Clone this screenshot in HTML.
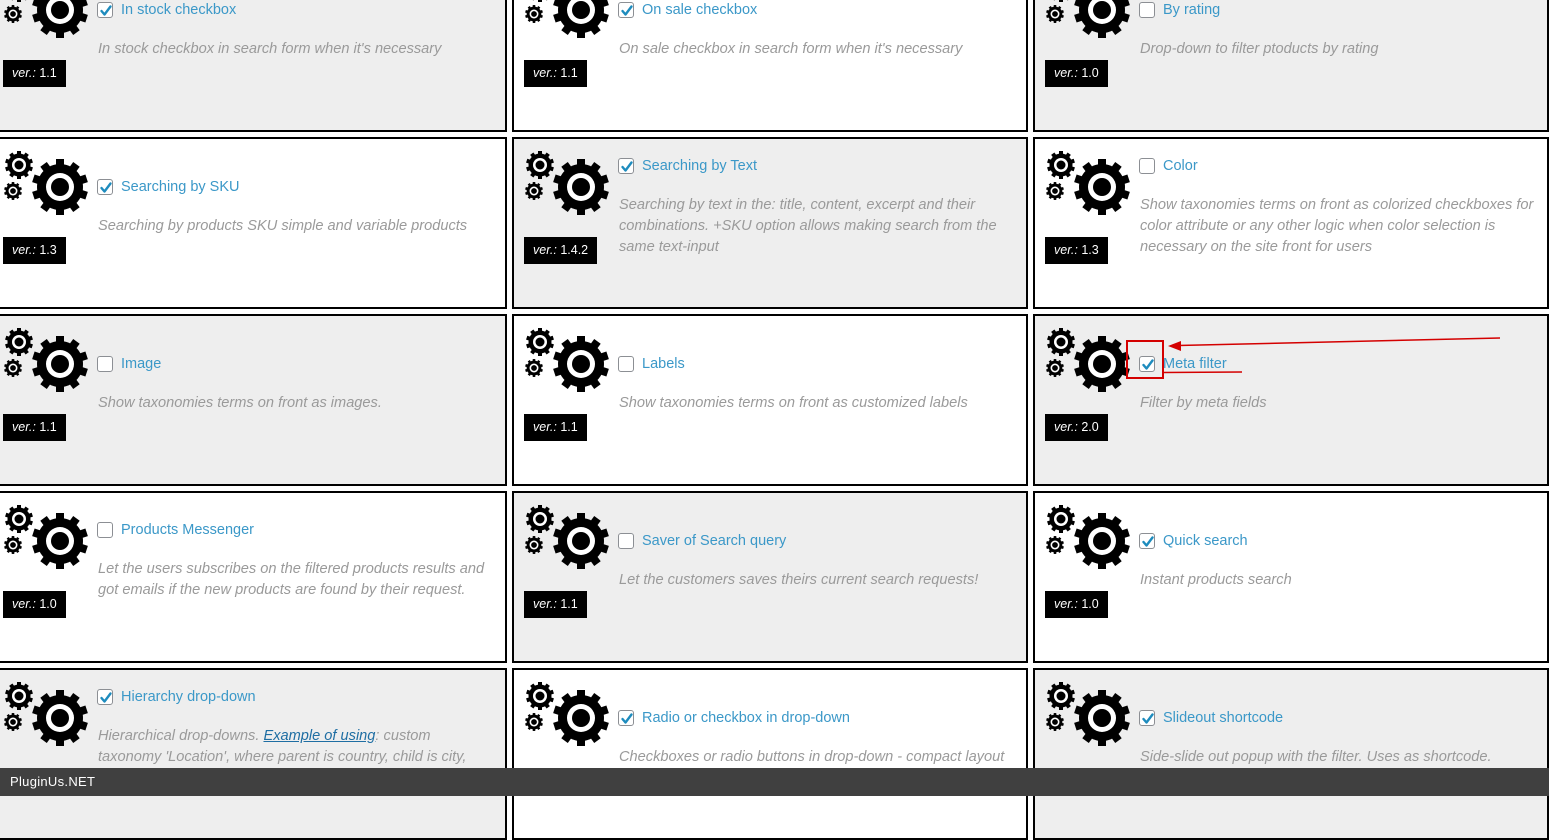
<!DOCTYPE html>
<html><head><meta charset="utf-8"><style>
*{margin:0;padding:0;box-sizing:border-box}
body{width:1549px;height:796px;overflow:hidden;background:#fff;font-family:"Liberation Sans",sans-serif;position:relative}
.c{position:absolute;width:516px;height:172px;border:2px solid #000;overflow:hidden}
.g{background:#eee}.w{background:#fff}
.gear{position:absolute;left:0;top:0}
.cb{position:absolute;left:104px;width:16px;height:16px;border:1px solid #8c8f94;border-radius:3px;background:#fff}
.cb svg{position:absolute;left:0;top:0}
.t{position:absolute;left:128px;font-size:14.5px;color:#3b98c8;line-height:20px;white-space:nowrap}
.d{position:absolute;left:105px;right:8px;font-size:14.6px;font-style:italic;color:#9a9a9a;line-height:21px}
.d a{color:#1f6ea3;text-decoration:underline}
.v{position:absolute;left:10px;top:98px;height:27px;padding:0 9px;background:#000;color:#fff;font-size:12.5px;line-height:27px}
.v i{font-style:italic}
.foot{position:absolute;left:0;top:768px;width:1549px;height:28px;background:#404040;color:#fff;font-size:13px;line-height:28px;padding-left:10px;letter-spacing:.3px}
</style></head><body>
<svg width="0" height="0" style="position:absolute"><defs>
<g id="gr"><circle r="23" fill="#000"/>
<g fill="#000"><rect x="-4" y="-28" width="8" height="9"/><rect x="-4" y="-28" width="8" height="9" transform="rotate(36)"/><rect x="-4" y="-28" width="8" height="9" transform="rotate(72)"/><rect x="-4" y="-28" width="8" height="9" transform="rotate(108)"/><rect x="-4" y="-28" width="8" height="9" transform="rotate(144)"/><rect x="-4" y="-28" width="8" height="9" transform="rotate(180)"/><rect x="-4" y="-28" width="8" height="9" transform="rotate(216)"/><rect x="-4" y="-28" width="8" height="9" transform="rotate(252)"/><rect x="-4" y="-28" width="8" height="9" transform="rotate(288)"/><rect x="-4" y="-28" width="8" height="9" transform="rotate(324)"/></g>
<circle r="14" fill="#fff"/><circle r="9" fill="#000"/></g>
<g id="gs"><use href="#gr" transform="translate(67,48)"/><use href="#gr" transform="translate(26,26) scale(.5)"/><use href="#gr" transform="translate(20,52) scale(.32)"/></g>
<g id="ck"><path d="M3.5 8 L6.5 11.5 L12.5 3.5" stroke="#1e8cbe" stroke-width="2.4" fill="none" stroke-linecap="round" stroke-linejoin="round"/></g>
</defs></svg>

<div class="c g" style="left:-9px;top:-40px"><svg class="gear" width="100" height="90"><use href="#gs"/></svg><div class="cb" style="top:40px"><svg width="16" height="16"><use href="#ck"/></svg></div><div class="t" style="top:38px">In stock checkbox</div><div class="d" style="top:77px">In stock checkbox in search form when it's necessary</div><div class="v"><i>ver.:</i> 1.1</div></div>
<div class="c w" style="left:512px;top:-40px"><svg class="gear" width="100" height="90"><use href="#gs"/></svg><div class="cb" style="top:40px"><svg width="16" height="16"><use href="#ck"/></svg></div><div class="t" style="top:38px">On sale checkbox</div><div class="d" style="top:77px">On sale checkbox in search form when it's necessary</div><div class="v"><i>ver.:</i> 1.1</div></div>
<div class="c g" style="left:1033px;top:-40px"><svg class="gear" width="100" height="90"><use href="#gs"/></svg><div class="cb" style="top:40px"></div><div class="t" style="top:38px">By rating</div><div class="d" style="top:77px">Drop-down to filter ptoducts by rating</div><div class="v"><i>ver.:</i> 1.0</div></div>

<div class="c w" style="left:-9px;top:137px"><svg class="gear" width="100" height="90"><use href="#gs"/></svg><div class="cb" style="top:40px"><svg width="16" height="16"><use href="#ck"/></svg></div><div class="t" style="top:38px">Searching by SKU</div><div class="d" style="top:77px">Searching by products SKU simple and variable products</div><div class="v"><i>ver.:</i> 1.3</div></div>
<div class="c g" style="left:512px;top:137px"><svg class="gear" width="100" height="90"><use href="#gs"/></svg><div class="cb" style="top:19px"><svg width="16" height="16"><use href="#ck"/></svg></div><div class="t" style="top:17px">Searching by Text</div><div class="d" style="top:56px">Searching by text in the: title, content, excerpt and their combinations. +SKU option allows making search from the same text-input</div><div class="v"><i>ver.:</i> 1.4.2</div></div>
<div class="c w" style="left:1033px;top:137px"><svg class="gear" width="100" height="90"><use href="#gs"/></svg><div class="cb" style="top:19px"></div><div class="t" style="top:17px">Color</div><div class="d" style="top:56px">Show taxonomies terms on front as colorized checkboxes for color attribute or any other logic when color selection is necessary on the site front for users</div><div class="v"><i>ver.:</i> 1.3</div></div>

<div class="c g" style="left:-9px;top:314px"><svg class="gear" width="100" height="90"><use href="#gs"/></svg><div class="cb" style="top:40px"></div><div class="t" style="top:38px">Image</div><div class="d" style="top:77px">Show taxonomies terms on front as images.</div><div class="v"><i>ver.:</i> 1.1</div></div>
<div class="c w" style="left:512px;top:314px"><svg class="gear" width="100" height="90"><use href="#gs"/></svg><div class="cb" style="top:40px"></div><div class="t" style="top:38px">Labels</div><div class="d" style="top:77px">Show taxonomies terms on front as customized labels</div><div class="v"><i>ver.:</i> 1.1</div></div>
<div class="c g" style="left:1033px;top:314px"><svg class="gear" width="100" height="90"><use href="#gs"/></svg><div class="cb" style="top:40px"><svg width="16" height="16"><use href="#ck"/></svg></div><div class="t" style="top:38px">Meta filter</div><div class="d" style="top:77px">Filter by meta fields</div><div class="v"><i>ver.:</i> 2.0</div></div>

<div class="c w" style="left:-9px;top:491px"><svg class="gear" width="100" height="90"><use href="#gs"/></svg><div class="cb" style="top:29px"></div><div class="t" style="top:27px">Products Messenger</div><div class="d" style="top:66px;right:14px">Let the users subscribes on the filtered products results and got emails if the new products are found by their request.</div><div class="v"><i>ver.:</i> 1.0</div></div>
<div class="c g" style="left:512px;top:491px"><svg class="gear" width="100" height="90"><use href="#gs"/></svg><div class="cb" style="top:40px"></div><div class="t" style="top:38px">Saver of Search query</div><div class="d" style="top:77px">Let the customers saves theirs current search requests!</div><div class="v"><i>ver.:</i> 1.1</div></div>
<div class="c w" style="left:1033px;top:491px"><svg class="gear" width="100" height="90"><use href="#gs"/></svg><div class="cb" style="top:40px"><svg width="16" height="16"><use href="#ck"/></svg></div><div class="t" style="top:38px">Quick search</div><div class="d" style="top:77px">Instant products search</div><div class="v"><i>ver.:</i> 1.0</div></div>

<div class="c g" style="left:-9px;top:668px"><svg class="gear" width="100" height="90"><use href="#gs"/></svg><div class="cb" style="top:19px"><svg width="16" height="16"><use href="#ck"/></svg></div><div class="t" style="top:17px">Hierarchy drop-down</div><div class="d" style="top:56px;right:30px">Hierarchical drop-downs. <a>Example of using</a>: custom taxonomy 'Location', where parent is country, child is city, and ...</div><div class="v"><i>ver.:</i> 1.0</div></div>
<div class="c w" style="left:512px;top:668px"><svg class="gear" width="100" height="90"><use href="#gs"/></svg><div class="cb" style="top:40px"><svg width="16" height="16"><use href="#ck"/></svg></div><div class="t" style="top:38px">Radio or checkbox in drop-down</div><div class="d" style="top:77px">Checkboxes or radio buttons in drop-down - compact layout</div><div class="v"><i>ver.:</i> 1.1</div></div>
<div class="c g" style="left:1033px;top:668px"><svg class="gear" width="100" height="90"><use href="#gs"/></svg><div class="cb" style="top:40px"><svg width="16" height="16"><use href="#ck"/></svg></div><div class="t" style="top:38px">Slideout shortcode</div><div class="d" style="top:77px">Side-slide out popup with the filter. Uses as shortcode.</div><div class="v"><i>ver.:</i> 1.0</div></div>

<svg style="position:absolute;left:0;top:0" width="1549" height="796">
<rect x="1127" y="341" width="36" height="37" fill="none" stroke="#d40000" stroke-width="2"/>
<line x1="1500" y1="338" x2="1178" y2="345.5" stroke="#d40000" stroke-width="1.5"/>
<path d="M1168 346 L1181 341 L1181 351 Z" fill="#d40000"/>
<line x1="1163" y1="372.5" x2="1242" y2="372" stroke="#d40000" stroke-width="1.5"/>
</svg>
<div class="foot">PluginUs.NET</div>
</body></html>
